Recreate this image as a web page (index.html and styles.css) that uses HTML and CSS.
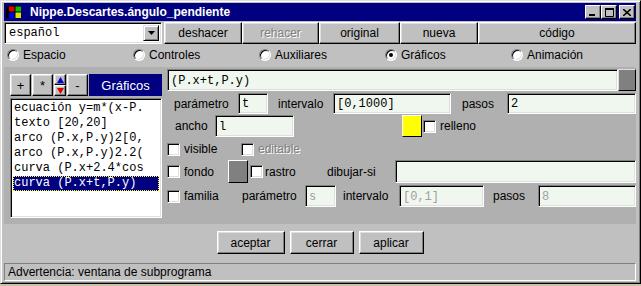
FILE: index.html
```html
<!DOCTYPE html>
<html lang="es">
  <head>
    <meta charset="UTF-8" />
    <title>Nippe.Descartes.ángulo_pendiente</title>
    <link rel="stylesheet" href="styles.css">
  </head>
  <body>
    <div class="win">
      <div class="titlebar">
        <svg class="app-icon" width="16" height="14" viewBox="0 0 16 14">
          <rect x="0" y="1" width="3" height="12" fill="#000"/>
          <rect x="3" y="1" width="6" height="6" fill="#e00000"/>
          <rect x="9" y="1" width="6" height="6" fill="#00c000"/>
          <rect x="3" y="7" width="6" height="6" fill="#0000e0"/>
          <rect x="9" y="7" width="6" height="6" fill="#e0e000"/>
          <path d="M3 1h12M3 7h12M9 1v12" stroke="#000" stroke-width="1"/>
        </svg>
        <span class="title">Nippe.Descartes.ángulo_pendiente</span>
        <div class="caption">
          <span class="cap-btn">
            <svg width="8" height="7" viewBox="0 0 8 7"><rect x="0" y="5" width="6" height="2" fill="#000"/></svg>
          </span>
          <span class="cap-btn">
            <svg width="9" height="9" viewBox="0 0 9 9"><path d="M0.5 1.5h8v7h-8z" fill="none" stroke="#000"/><rect x="0" y="0" width="9" height="2" fill="#000"/></svg>
          </span>
          <span class="cap-btn cap-close">
            <svg width="8" height="7" viewBox="0 0 8 7"><path d="M0 0l8 7M8 0l-8 7" stroke="#000" stroke-width="1.6"/></svg>
          </span>
        </div>
      </div>

      <div class="toolbar">
        <div class="combo">
          <span class="combo-text">español</span>
          <span class="combo-arrow">
            <svg width="7" height="4" viewBox="0 0 7 4"><path d="M0 0h7l-3.5 4z" fill="#000"/></svg>
          </span>
        </div>
        <div class="btn b-deshacer">deshacer</div>
        <div class="btn b-rehacer disabled">rehacer</div>
        <div class="btn b-original">original</div>
        <div class="btn b-nueva">nueva</div>
        <div class="btn b-codigo">código</div>
      </div>

      <div class="tabs">
        <label class="tab"><span class="radio"></span>Espacio</label>
        <label class="tab"><span class="radio"></span>Controles</label>
        <label class="tab"><span class="radio"></span>Auxiliares</label>
        <label class="tab"><span class="radio checked"></span>Gráficos</label>
        <label class="tab"><span class="radio"></span>Animación</label>
      </div>

      <div class="panel">
        <div class="side">
          <div class="side-tools">
            <div class="btn tool">+</div>
            <div class="btn tool">*</div>
            <div class="arrows">
              <span class="btn arrow">
                <svg width="7" height="6" viewBox="0 0 7 6"><path d="M0 6h7l-3.5-6z" fill="#0000e0"/></svg>
              </span>
              <span class="btn arrow">
                <svg width="7" height="6" viewBox="0 0 7 6"><path d="M0 0h7l-3.5 6z" fill="#e00000"/></svg>
              </span>
            </div>
            <div class="btn tool">-</div>
            <div class="side-head">Gráficos</div>
          </div>
          <ul class="list">
            <li>ecuación y=m*(x-P.</li>
            <li>texto [20,20]</li>
            <li>arco (P.x,P.y)2[0,</li>
            <li>arco (P.x,P.y)2.2(</li>
            <li>curva (P.x+2.4*cos</li>
            <li class="selected">curva (P.x+t,P.y)</li>
          </ul>
        </div>

        <div class="editor">
          <div class="expr">
            <div class="field">(P.x+t,P.y)</div>
            <div class="btn expr-btn"></div>
          </div>

          <div class="row r1">
            <span class="lbl pl7">parámetro</span>
            <div class="field">t</div>
            <span class="lbl pl10">intervalo</span>
            <div class="field">[0,1000]</div>
            <span class="lbl pl11">pasos</span>
            <div class="field">2</div>
          </div>

          <div class="row r2">
            <span class="lbl pl8">ancho</span>
            <div class="field">l</div>
            <span></span>
            <div class="btn swatch yellow"></div>
            <label class="check ml1"><span class="box"></span>relleno</label>
          </div>

          <div class="row r3">
            <label class="check c-visible"><span class="box"></span>visible</label>
            <label class="check disabled"><span class="box"></span>editable</label>
          </div>

          <div class="row r4">
            <label class="check"><span class="box"></span>fondo</label>
            <div class="btn swatch gray"></div>
            <label class="check ml1"><span class="box"></span></label>
            <span class="lbl pl3">rastro</span>
            <span class="lbl">dibujar-si</span>
            <div class="field"></div>
          </div>

          <div class="row r5">
            <label class="check"><span class="box"></span>familia</label>
            <span class="lbl">parámetro</span>
            <div class="field off">s</div>
            <span class="lbl pl7">intervalo</span>
            <div class="field off">[0,1]</div>
            <span class="lbl pl9">pasos</span>
            <div class="field off">8</div>
          </div>
        </div>
      </div>

      <div class="actions">
        <div class="btn b-aceptar">aceptar</div>
        <div class="btn b-cerrar">cerrar</div>
        <div class="btn b-aplicar">aplicar</div>
      </div>

      <div class="status">Advertencia: ventana de subprograma</div>
    </div>
  </body>
</html>
```

FILE: styles.css
```css
* {
  box-sizing: border-box;
}

html {
  background: #c8c4a6;
}

body {
  margin: 0;
  font: 12px "Liberation Sans", Arial, sans-serif;
  color: #000;
}

ul {
  margin: 0;
  padding: 0;
  list-style: none;
}

/* window frame */
.win {
  width: 641px;
  height: 284px;
  padding: 2px 4px 2px 3px;
  background: #c0c0c0;
  border: 1px solid;
  border-color: #dfdfdf #000 #000 #dfdfdf;
  box-shadow: inset 1px 1px #fff, inset -1px -1px #808080;
}

.titlebar {
  height: 18px;
  display: flex;
  align-items: center;
  padding: 0 1px 0 2px;
  background: #000080;
  color: #fff;
}

.app-icon {
  display: block;
}

.title {
  margin-left: 8px;
  font-weight: bold;
  font-size: 12px;
}

.caption {
  margin-left: auto;
  display: flex;
}

.cap-btn {
  width: 16px;
  height: 14px;
  display: flex;
  align-items: center;
  justify-content: center;
  background: #c0c0c0;
  border: 1px solid;
  border-color: #fff #000 #000 #fff;
  box-shadow: inset -1px -1px #808080;
}

.cap-close {
  margin-left: 2px;
}

/* raised button */
.btn {
  display: flex;
  align-items: center;
  justify-content: center;
  background: #c0c0c0;
  border: 1px solid;
  border-color: #fff #000 #000 #fff;
  box-shadow: inset -1px -1px #808080, inset 1px 1px #dfdfdf;
  white-space: nowrap;
}

.btn.disabled,
.check.disabled {
  color: #808080;
  text-shadow: 1px 1px #fff;
}

/* top row */
.toolbar {
  display: flex;
  height: 22px;
  margin-top: 1px;
}

.combo {
  width: 158px;
  display: flex;
  align-items: stretch;
  background: #fff;
  border: 1px solid;
  border-color: #808080 #fff #fff #808080;
  box-shadow: inset 1px 1px #000, inset -1px -1px #dfdfdf;
  padding: 2px;
}

.combo-text {
  flex: 1;
  padding: 1px 0 0 2px;
  font-family: "Liberation Mono", monospace;
  font-size: 12px;
}

.combo-arrow {
  width: 16px;
  display: flex;
  align-items: center;
  justify-content: center;
  background: #c0c0c0;
  border: 1px solid;
  border-color: #dfdfdf #000 #000 #dfdfdf;
  box-shadow: inset 1px 1px #fff, inset -1px -1px #808080;
}

.b-deshacer { width: 78px; margin-left: 2px; }
.b-rehacer { width: 77px; }
.b-original { width: 81px; }
.b-nueva { width: 78px; }
.b-codigo { flex: 1; }

/* radio row */
.tabs {
  display: grid;
  grid-template-columns: repeat(5, 126px);
  height: 18px;
  margin-top: 2px;
}

.tab {
  display: flex;
  align-items: center;
  padding-left: 3px;
}

.radio {
  position: relative;
  width: 12px;
  height: 12px;
  margin-right: 4px;
  border-radius: 50%;
  background: #fff;
  border: 1px solid;
  border-color: #808080 #fff #fff #808080;
  box-shadow: inset 1px 1px #000, inset -1px -1px #dfdfdf;
}

.radio.checked::after {
  content: "";
  position: absolute;
  left: 3px;
  top: 3px;
  width: 4px;
  height: 4px;
  border-radius: 50%;
  background: #000;
}

/* object panel */
.panel {
  display: flex;
  gap: 5px;
  height: 157px;
  margin-top: 3px;
  padding: 2px 0 0 6px;
  background: #b0b0b0;
}

.side {
  width: 152px;
  margin-top: 5px;
}

.side-tools {
  display: flex;
  height: 22px;
}

.tool {
  width: 21px;
  margin-right: 1px;
  font-size: 13px;
}

.arrows {
  width: 12px;
  display: flex;
  flex-direction: column;
  margin-right: 1px;
}

.arrow {
  flex: 1;
}

.side-head {
  flex: 1;
  display: flex;
  align-items: center;
  justify-content: center;
  background: #000080;
  color: #fff;
  font-size: 13px;
}

.list {
  height: 120px;
  margin-top: 2px;
  padding: 2px 0 0 2px;
  background: #fff;
  border: 1px solid;
  border-color: #808080 #fff #fff #808080;
  box-shadow: inset 1px 1px #000, inset -1px -1px #dfdfdf;
  font-family: "Liberation Mono", monospace;
  font-size: 12px;
  overflow: hidden;
}

.list li {
  height: 15px;
  line-height: 15px;
  padding-left: 1px;
  white-space: nowrap;
}

.list .selected {
  margin-right: 2px;
  background: #000080;
  color: #fff;
  outline: 1px dotted #ffff00;
  outline-offset: -1px;
}

.editor {
  flex: 1;
}

.field {
  display: flex;
  align-items: center;
  padding: 1px 0 0 3px;
  background: #f0f7ef;
  border: 1px solid;
  border-color: #808080 #fff #fff #808080;
  box-shadow: inset 1px 1px #000, inset -1px -1px #dfdfdf;
  font-family: "Liberation Mono", monospace;
  font-size: 12px;
  white-space: nowrap;
}

.field.off {
  color: #a0a0a0;
}

.expr {
  display: flex;
  height: 22px;
}

.expr .field {
  flex: 1;
}

.expr-btn {
  width: 18px;
  background: #808080;
  box-shadow: none;
  border-color: #dfdfdf #000 #000 #dfdfdf;
}

.row {
  display: grid;
  align-items: stretch;
}

.lbl {
  display: flex;
  align-items: center;
  white-space: nowrap;
}

.pl3 { padding-left: 3px; }
.pl7 { padding-left: 7px; }
.pl8 { padding-left: 8px; }
.pl9 { padding-left: 9px; }
.pl10 { padding-left: 10px; }
.pl11 { padding-left: 11px; }
.ml1 { margin-left: 1px; }

.r1 {
  height: 21px;
  margin-top: 2px;
  grid-template-columns: 71px 30px 65px 118px 56px 1fr;
}

.r2 {
  height: 22px;
  margin-top: 1px;
  grid-template-columns: 48px 79px 108px 20px 1fr;
}

.r3 {
  height: 20px;
  margin-top: 2px;
  grid-template-columns: 74px 1fr;
}

.r4 {
  height: 23px;
  margin-top: 1px;
  grid-template-columns: 61px 21px 13px 65px 68px 1fr;
}

.r5 {
  height: 22px;
  margin-top: 2px;
  grid-template-columns: 75px 63px 31px 63px 85px 54px 1fr;
}

.swatch {
  width: 20px;
  box-shadow: none;
}

.swatch.yellow {
  background: #ffff00;
}

.swatch.gray {
  background: #808080;
}

.check {
  display: flex;
  align-items: center;
  white-space: nowrap;
}

.box {
  width: 13px;
  height: 13px;
  margin-right: 4px;
  flex: none;
  background: #fff;
  border: 1px solid;
  border-color: #808080 #fff #fff #808080;
  box-shadow: inset 1px 1px #000, inset -1px -1px #dfdfdf;
}

.r4 .ml1 .box {
  margin-right: 0;
}

/* bottom buttons */
.actions {
  display: flex;
  justify-content: center;
  gap: 5px;
  height: 23px;
  margin-top: 7px;
}

.b-aceptar { width: 68px; }
.b-cerrar { width: 64px; }
.b-aplicar { width: 65px; }

.status {
  height: 18px;
  margin-top: 9px;
  padding-left: 3px;
  display: flex;
  align-items: center;
  border: 1px solid;
  border-color: #808080 #fff #fff #808080;
}
```
